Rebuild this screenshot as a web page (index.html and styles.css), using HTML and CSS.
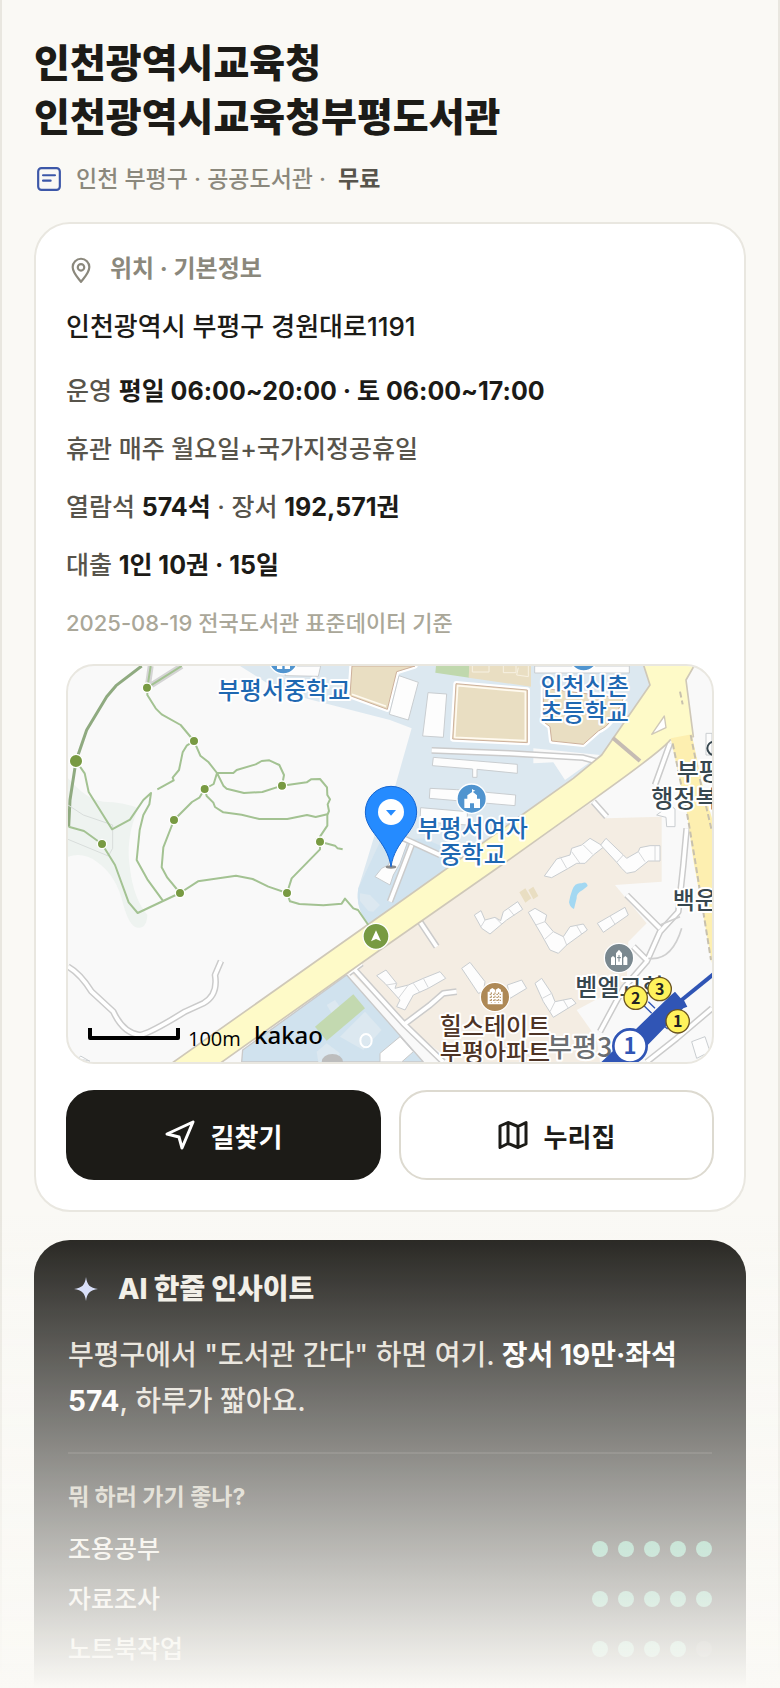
FILE: index.html
```html
<!DOCTYPE html>
<html lang="ko">
<head>
    <meta charset="UTF-8">
    <meta name="viewport" content="width=device-width, initial-scale=1.0">
    <title>인천광역시교육청부평도서관</title>
    <link rel="stylesheet" href="styles.css">
</head>
<body>
    <main class="page">
        <h1>인천광역시교육청<br>인천광역시교육청부평도서관</h1>
        <p class="meta">
            <svg class="meta-icon" viewBox="0 0 24 24">
                <rect x="2" y="2" width="20" height="20" rx="3"/>
                <path d="M6.500 8.500h11M6.500 13.500h7"/>
            </svg>
            <span>인천 부평구 · 공공도서관 ·</span>
            <b>무료</b>
        </p>

        <section class="card">
            <h2 class="card-title">
                <svg class="pin-icon" viewBox="0 0 24 24">
                    <path d="M12 23C9 19 4.300 14.500 4.300 9.300a7.700 7.700 0 0 1 15.400 0C19.700 14.500 15 19 12 23z"/>
                    <circle cx="12" cy="9.500" r="3"/>
                </svg>
                위치 · 기본정보
            </h2>
            <p class="address">인천광역시 부평구 경원대로1191</p>
            <p class="info">운영 <b>평일 06:00~20:00 · 토 06:00~17:00</b></p>
            <p class="info">휴관 매주 월요일+국가지정공휴일</p>
            <p class="info">열람석 <b>574석</b> · 장서 <b>192,571권</b></p>
            <p class="info">대출 <b>1인 10권 · 15일</b></p>
            <p class="source">2025-08-19 전국도서관 표준데이터 기준</p>

            <div class="map">
                <svg viewBox="24 33 1932 1188" preserveAspectRatio="xMidYMid slice">
                    <!-- 바탕 -->
                    <path fill="#eef3f0" d="M24 370Q80 435 130 440Q190 440 235 460Q195 550 210 640Q220 730 262 780Q260 820 235 818Q210 820 190 750Q170 660 110 620Q70 590 24 605z"/>
                    <path fill="#dce8f0" d="M540 33Q600 70 660 110L990 195 1055 220 1005 395 950 520Q920 620 895 700 885 760 925 805L1540 370 1640 300 1770 90V33z"/>
                    <path fill="#d1e3ef" d="M960 560L1090 550 1230 610 1100 690 990 770 925 805Q885 760 895 700z"/>
                    <path fill="#f9f9f9" d="M1420 280L1620 300 1515 375 1480 322 1420 325z"/>
                    <path fill="#f4ede3" d="M870 950L1590 445 1640 490 1805 485V680L1665 690 1760 805 1705 860 1700 985 1550 1065 1610 1150 1620 1221H1180L1030 1110z"/>
                    <path fill="#d0e2ee" stroke="#c9c9c9" stroke-width="4" d="M545 1221L548 1185 860 960 1090 1221z"/>
                    <path fill="#dce8f0" d="M800 1050l25-15 15 20-25 20zM840 1145l75-75 50 55-55 60zM770 1190l30-25 40 30-15 26h-50zM900 715l30 5 30 30-20 20-15-2-25-30z"/>
                    <path fill="#c3d9b0" d="M765 1115L880 1018 915 1060 800 1157z"/>
                    <path fill="#fff" stroke="#c9c9c9" stroke-width="3" d="M960 1195l60-50 40 45-35 31h-65z"/>
                    <ellipse cx="918" cy="1157" rx="17" ry="20" fill="none" stroke="#fff" stroke-width="6"/>
                    <path fill="#bdbdbd" d="M785 1221a32 24 0 0 1 64 0z"/>

                    <!-- 운동장 -->
                    <path fill="#c0d8ad" d="M1128 33h100v35l-102-15z"/>
                    <path fill="#e9dec2" d="M1228 33h185v62l-187-27z"/>
                    <path fill="none" stroke="#f7f1e2" stroke-width="3" d="M1237 33v18h50V33M1330 33v20h38V33M1375 38l-5 22 35 5V33M980 33v20"/>
                    <g stroke="#fff" stroke-width="16">
                        <path d="M876 33L870 122 982 163 1010 50 1065 33z"/>
                        <path d="M1188 86L1402 105V263L1178 252z"/>
                        <path d="M1450 100L1690 130Q1660 210 1615 228L1570 268 1475 258 1470 215 1450 200z"/>
                    </g>
                    <g fill="#e9dec2" stroke="#cdb09b" stroke-width="3">
                        <path d="M876 33L870 122 982 163 1010 50 1065 33z"/>
                        <path d="M1188 86L1402 105V263L1178 252z"/>
                        <path d="M1450 100L1690 130Q1660 210 1615 228L1570 268 1475 258 1470 215 1450 200z"/>
                    </g>
                    <path fill="none" stroke="#fffaf0" stroke-width="5" d="M1193 92L1396 110V257L1184 247zM876 118L978 154"/>

                    <!-- 건물 -->
                    <g fill="#fdfdfd" stroke="#c9cdd0" stroke-width="3">
                        <path d="M680 33L675 62 775 64 782 33zM1017 62L1075 82 1045 195 988 178zM1104 113L1160 117 1150 247 1088 243zM1424 33V54H1708V33z"/>
                        <path d="M1120 307L1372 328 1372 355 1251 343V367H1238V342L1117 332zM1110 400L1190 404 1280 412 1367 420 1365 452 1108 430zM1082 458L1222 470V510L1080 500z"/>
                        <path d="M1010 560L1045 555 1020 625 1000 660 990 690 945 665 965 640 985 630z"/>
                        <path d="M1790 480L1830 450 1845 462V515H1820L1818 487zM1938 235h18v65h-18z"/>
                        <path d="M1453 663L1490 612 1530 600 1535 580 1565 570 1590 550 1632 575 1600 600 1575 625 1550 625 1525 640 1475 668z"/>
                        <path d="M1622 570L1638 550 1690 600 1700 610 1735 590 1740 578 1770 572H1800V618H1765L1725 650 1700 655 1685 640 1670 622z"/>
                        <path d="M1243 780L1263 767 1275 795 1305 787 1322 797 1330 770 1373 740 1388 763 1340 795 1290 837 1265 820z"/>
                        <path d="M1405 772L1425 760 1460 780 1455 800 1480 830 1510 845 1530 815 1570 807 1582 825 1520 870 1495 895 1470 885 1445 840z"/>
                        <path d="M1612 805L1695 757 1705 780 1630 832zM1205 940L1230 922 1275 980 1270 1010 1255 1015zM1342 990L1385 975 1400 1000 1350 1030z"/>
                        <path d="M950 962L978 945 1010 985 1005 1000 1045 990 1090 970 1140 950 1157 970 1105 1000 1060 1020 1035 1065 1010 1055 1020 1035 975 985z"/>
                        <path d="M1425 985L1445 970 1475 1015 1485 1040 1535 1030 1548 1045 1480 1087 1450 1040z"/>
                        <path d="M1895 1160L1935 1145 1950 1190 1910 1210zM62 1203l28 16-35-8z"/>
                    </g>
                    <g fill="none" stroke="#d6d8da" stroke-width="3">
                        <path d="M1275 795l-12 20M1305 787l20 20M1345 760l18 22M1455 800l-28 10M1480 830l-25 22M1510 845l10 25M1550 812l15 25M1650 783l15 25M1690 600l-20 22M1735 590l20 30M1785 572v46M1010 985l-30 5M1045 990l-30 40M1060 985l20 28M1090 970l15 28M1500 605l20 35M1535 590l25 35M1570 570l28 28M1475 1015l-28 15M1485 1040l-15 30M1510 1035l15 25"/>
                    </g>
                    <path fill="#e9dec2" d="M1378 712l18-12 18 30-18 13zM1405 705l15-10 15 28-15 10z"/>
                    <path fill="#a3d8f2" d="M1565 685q15-8 18 8l-15 12q-20 10-18 25l-8 32q-12-5-15-20 3-20 10-38 8-22 28-19z"/>

                    <!-- 골목길 -->
                    <g class="road-case">
                        <path d="M1115 286L1350 295 1570 308 1620 322M885 945L1030 1105 1150 1221M1030 1110L1110 1050 1150 1015 1190 1010M1600 440L1640 485M1080 800L1130 875M1020 545L1140 600M1055 570L990 740M24 935Q60 955 95 1010L160 1070Q190 1135 240 1140 270 1135 375 1070L430 1045Q475 1020 465 960L483 918"/>
                        <path d="M1830 265L1785 390M1880 520L1870 630 1855 770 1800 830 1760 920 1690 1000 1620 1130M1700 720L1800 820M1720 875L1765 920M1956 1060L1850 1150 1760 1221M865 955L905 925"/>
                    </g>
                    <g class="road">
                        <path d="M1115 286L1350 295 1570 308 1620 322M885 945L1030 1105 1150 1221M1030 1110L1110 1050 1150 1015 1190 1010M1600 440L1640 485M1080 800L1130 875M1020 545L1140 600M1055 570L990 740M24 935Q60 955 95 1010L160 1070Q190 1135 240 1140 270 1135 375 1070L430 1045Q475 1020 465 960L483 918"/>
                        <path d="M1830 265L1785 390M1880 520L1870 630 1855 770 1800 830 1760 920 1690 1000 1620 1130M1700 720L1800 820M1720 875L1765 920M1956 1060L1850 1150 1760 1221M865 955L905 925"/>
                    </g>
                    <path fill="none" stroke="#cfcfcf" stroke-width="5" d="M1800 810l60-25M1765 910q70 10 100-90"/>

                    <!-- 큰길 -->
                    <path fill="#fefac8" stroke="#cfc8b8" stroke-width="5" d="M335 1225L990 762 1540 370 1625 300 1770 90 1750 28H1905L1878 75 1900 245 1830 255Q1815 280 1605 430L1325 630 960 885 480 1225z"/>
                    <path fill="#fdefb0" d="M1832 250L1895 238 1930 400 1956 490V925L1900 615 1882 480z"/>
                    <path fill="none" stroke="#c8c1ae" stroke-width="6" stroke-dasharray="18 9" d="M1838 265L1882 480 1905 615 1953 915M1892 240L1912 340 1956 530M1860 110L1868 148"/>
                    <path fill="none" stroke="#c5bbb3" stroke-width="12" d="M1658 248L1740 318"/>
                    <path fill="#fff" stroke="#cfc8b8" stroke-width="4" d="M1775 238L1813 183 1818 218z"/>

                    <!-- 산책로 -->
                    <path fill="none" stroke="#d4d4d4" stroke-width="18" d="M272 33L264 90M365 33L275 90"/>
                    <path fill="none" stroke="#8faa80" stroke-width="9" d="M245 33L168 92 140 125 80 225 48 318 30 435 26 515"/>
                    <path fill="none" stroke="#d8dddb" stroke-width="3" d="M24 450L70 480 158 510V580L145 603 24 553"/>
                    <g class="trail">
                        <path d="M272 33L262 98V120L287 160 305 178 362 210 402 258 421 302 446 322 471 354H520L530 345 587 328 605 318 628 316 658 330 672 360 666 392M365 33L262 98"/>
                        <path d="M402 258L380 272 368 292 357 345 338 368 341 376 292 403M471 354L490 392 500 401 552 414 607 411 666 392 740 382 753 373 780 372 801 397 802 420 810 433 803 448 807 468 802 480V512L780 545V560M471 354L461 387 434 402 418 428 396 441 342 495 310 577 305 637 322 668 360 714"/>
                        <path d="M434 402L440 423 460 443 465 456 490 472 545 479 598 492H682L741 480 767 486 802 478M780 560L825 572 833 580 848 583M780 560L780 583 695 670 681 714"/>
                        <path d="M48 318L74 355 86 411 156 523 210 494 250 435 273 414 268 448 250 480 239 525 230 615 262 673 308 736M26 515L72 528 126 567 165 630 206 742 233 774 360 714 414 679 528 662 578 672 625 695 681 714 690 739 718 747 790 751 845 746 855 731 880 760 894 765 925 810"/>
                    </g>
                    <g fill="#789a42" stroke="#fff" stroke-width="4">
                        <circle cx="261" cy="98" r="14"/>
                        <circle cx="402" cy="258" r="14"/>
                        <circle cx="434" cy="402" r="14"/>
                        <circle cx="342" cy="495" r="14"/>
                        <circle cx="666" cy="392" r="14"/>
                        <circle cx="780" cy="560" r="14"/>
                        <circle cx="126" cy="567" r="14"/>
                        <circle cx="360" cy="714" r="14"/>
                        <circle cx="681" cy="714" r="14"/>
                        <circle cx="48" cy="318" r="20"/>
                        <circle cx="948" cy="844" r="39"/>
                    </g>
                    <path fill="#fff" d="M948 826L963 859 948 852 933 859z"/>

                    <!-- 시설 아이콘 -->
                    <g stroke="#fff" stroke-width="4">
                        <circle cx="670" cy="14" r="43" fill="#5094cf"/>
                        <circle cx="1571" cy="5" r="43" fill="#5094cf"/>
                        <circle cx="1235" cy="431" r="44" fill="#5094cf"/>
                        <circle cx="1677" cy="909" r="44" fill="#7a888f"/>
                        <circle cx="1305" cy="1026" r="44" fill="#ae8956"/>
                    </g>
                    <path fill="#fff" d="M651 30h16v12h-16zM674 30h16v12h-16z"/>
                    <path fill="#fff" d="M1213 459V431H1222V421L1236 411V403H1239V411L1251 421V431H1260V459H1242V445H1230V459zM1236 403l10 4-10 5z"/>
                    <path fill="#fff" d="M1653 930V908l6-5 6 5V930zM1690 930V908l6-5 6 5V930zM1668 930V895l9-11 9 11V930z"/>
                    <path fill="#fff" d="M1283 1048V1010h6v-6l8-5 8 5v6h2v-6l8-5 8 5v6h5V1048z"/>
                    <path fill="none" stroke="#7a888f" stroke-width="3" d="M1677 900v20M1671 908h12"/>
                    <path fill="none" stroke="#ae8956" stroke-width="3" stroke-dasharray="5 5" d="M1289 1018h34M1289 1027h34M1289 1036h34M1294 1012v32M1305 1012v32M1316 1012v32"/>

                    <!-- 지명 -->
                    <g class="label school">
                        <text x="672" y="131">부평서중학교</text>
                        <text x="1574" y="121">인천신촌</text>
                        <text x="1574" y="199">초등학교</text>
                        <text x="1238" y="547">부평서여자</text>
                        <text x="1238" y="625">중학교</text>
                    </g>
                    <g class="label place">
                        <text x="1850" y="376">부평</text>
                        <text x="1774" y="455">행정복지</text>
                        <text x="1838" y="763">백운역</text>
                        <text x="1546" y="1024">벧엘교회</text>
                        <circle cx="1962" cy="280" r="20" fill="none" stroke="#37474f" stroke-width="6"/>
                    </g>
                    <text class="label district" x="1462" y="1205">부평3동</text>
                    <g class="label apartment">
                        <text x="1305" y="1141">힐스테이트</text>
                        <text x="1305" y="1219">부평아파트</text>
                    </g>

                    <!-- 지하철 -->
                    <path fill="none" stroke="#3055b5" stroke-width="12" d="M1865 1035L1960 958"/>
                    <path fill="none" stroke="#3055b5" stroke-width="4" d="M1752 1052L1775 1075M1765 1040l20 20M1808 1110l15 12"/>
                    <path fill="#3055b5" d="M1620 1225L1725 1125 1830 1023 1845 1010 1862 1030 1868 1028 1882 1055 1870 1060 1710 1225z"/>
                    <circle cx="1710" cy="1173" r="50" fill="#fff" stroke="#3055b5" stroke-width="8"/>
                    <text class="line-no" x="1710" y="1197">1</text>
                    <g class="exit">
                        <circle cx="1727" cy="1028" r="35"/>
                        <circle cx="1799" cy="1002" r="35"/>
                        <circle cx="1853" cy="1099" r="35"/>
                        <text x="1727" y="1046">2</text>
                        <text x="1799" y="1020">3</text>
                        <text x="1853" y="1117">1</text>
                    </g>

                    <!-- 도서관 위치 -->
                    <ellipse cx="993" cy="636" rx="16" ry="5" fill="#8b8b8b"/>
                    <path fill="#258bff" stroke="#1565d0" stroke-width="3" d="M993 394A77 77 0 0 1 1070 471C1070 530 1005 555 993 635 981 555 916 530 916 471A77 77 0 0 1 993 394z"/>
                    <circle cx="993" cy="471" r="39" fill="#fff"/>
                    <path fill="#258bff" d="M978 465H1008L993 482z"/>

                    <!-- 축척 -->
                    <path fill="none" stroke="#000" stroke-width="12" d="M90 1119V1149H354V1119"/>
                    <text class="scale" x="384" y="1172">100m</text>
                    <text class="kakao" x="582" y="1166">kakao</text>
                </svg>
            </div>

            <div class="actions">
                <button type="button" class="btn btn-dark">
                    <svg viewBox="0 0 30 30"><path d="M28 2L2 14l12 3 3 11z"/></svg>
                    길찾기
                </button>
                <button type="button" class="btn">
                    <svg viewBox="0 0 30 30"><path d="M2 6l8-3.500 10 4 8-4V24l-8 3.500-10-4-8 4zM10 2.500v21M20 6.500v21"/></svg>
                    누리집
                </button>
            </div>
        </section>

        <section class="insight">
            <h2 class="insight-title">
                <svg viewBox="0 0 24 24"><path d="M12 0c1 8 4 11 12 12-8 1-11 4-12 12-1-8-4-11-12-12 8-1 11-4 12-12z"/></svg>
                AI 한줄 인사이트
            </h2>
            <p class="insight-text">부평구에서 "도서관 간다" 하면 여기. <b>장서 19만·좌석 574</b>, 하루가 짧아요.</p>
            <h3>뭐 하러 가기 좋나?</h3>
            <ul class="ratings">
                <li>조용공부 <span class="dots"><i></i><i></i><i></i><i></i><i></i></span></li>
                <li>자료조사 <span class="dots"><i></i><i></i><i></i><i></i><i></i></span></li>
                <li>노트북작업 <span class="dots"><i></i><i></i><i></i><i></i><i class="off"></i></span></li>
            </ul>
        </section>
        <div class="fade"></div>
    </main>
</body>
</html>
```

FILE: styles.css
```css
* {
    box-sizing: border-box;
    margin: 0;
    padding: 0;
}
body {
    font-family: Inter, "Noto Sans CJK KR", sans-serif;
    font-weight: 500;
    background-color: #faf9f5;
    color: #1c1b17;
}
.page {
    position: relative;
    height: 100vh;
    overflow: hidden;
    padding: 36px 32px 0;
    border-left: 2px solid #e9e7e0;
    border-right: 2px solid #e9e7e0;
}
h1 {
    font-size: 39px;
    line-height: 54px;
    font-weight: 800;
}
svg {
    fill: none;
    stroke: currentColor;
    stroke-linecap: round;
    stroke-linejoin: round;
    flex-shrink: 0;
}
.meta {
    display: flex;
    align-items: center;
    gap: 12px;
    margin-top: 18px;
    font-size: 23px;
    line-height: 34px;
    color: #8b887c;
}
.meta b {
    color: #57544b;
}
.meta-icon {
    width: 26px;
    height: 26px;
    margin: 0 2px;
    color: #3c57a8;
    stroke-width: 2;
}
.card {
    margin-top: 26px;
    padding: 28px 30px 30px;
    background-color: #ffffff;
    border: 2px solid #e9e7e0;
    border-radius: 36px;
}
.card-title {
    display: flex;
    align-items: center;
    gap: 16px;
    padding-left: 2px;
    font-size: 24px;
    line-height: 34px;
    color: #8b887c;
}
.pin-icon {
    width: 26px;
    height: 26px;
    margin-top: 2px;
    stroke-width: 2;
}
.address {
    margin-top: 22px;
    font-size: 26px;
    line-height: 38px;
}
.info {
    margin-top: 24px;
    font-size: 25px;
    line-height: 34px;
    color: #57544b;
}
.address + .info {
    margin-top: 28px;
}
.info b {
    color: #1c1b17;
}
.source {
    margin-top: 26px;
    font-size: 22px;
    line-height: 30px;
    color: #aaa799;
}

/* 지도 */
.map {
    margin-top: 26px;
    height: 400px;
    border: 2px solid #e9e7e0;
    border-radius: 28px;
    overflow: hidden;
    background-color: #f9f9f9;
}
.map svg {
    display: block;
    width: 100%;
    height: 100%;
    stroke: none;
    stroke-linecap: butt;
}
.road-case path {
    fill: none;
    stroke: #cbcbcb;
    stroke-width: 20px;
}
.road path {
    fill: none;
    stroke: #ffffff;
    stroke-width: 11px;
}
.trail path {
    fill: none;
    stroke: #a3c292;
    stroke-width: 6px;
}
.label {
    font-size: 72px;
    font-weight: 500;
    text-anchor: middle;
    paint-order: stroke;
    font-family: "Noto Sans CJK KR", sans-serif;
}
.label text, .district {
    stroke: #ffffff;
    stroke-width: 12px;
}
.school {
    fill: #1e68b2;
}
.place {
    fill: #37474f;
    text-anchor: start;
}
.apartment {
    fill: #4e3426;
}
.district {
    fill: #6a6d70;
    font-size: 81px;
    text-anchor: start;
}
.line-no, .exit text {
    font-family: "Noto Sans CJK KR", sans-serif;
    font-weight: 700;
    text-anchor: middle;
}
.line-no {
    font-size: 66px;
    fill: #3055b5;
}
.exit circle {
    fill: #fff25c;
    stroke: #6b5420;
    stroke-width: 4px;
}
.exit text {
    font-size: 48px;
    fill: #222222;
}
.scale {
    font-family: "Open Sans", sans-serif;
    font-size: 60px;
    font-weight: 400;
    fill: #000000;
}
.kakao {
    font-family: "Noto Sans", sans-serif;
    font-size: 72px;
    fill: #000000;
}

.actions {
    display: flex;
    gap: 18px;
    margin-top: 26px;
}
.btn {
    flex: 1;
    display: flex;
    align-items: center;
    justify-content: center;
    gap: 16px;
    height: 90px;
    font-family: inherit;
    font-size: 26px;
    font-weight: 700;
    color: #1c1b17;
    background-color: #ffffff;
    border: 2px solid #dddad0;
    border-radius: 28px;
    cursor: pointer;
}
.btn-dark {
    color: #ffffff;
    background-color: #1c1b17;
    border-color: #1c1b17;
}
.btn svg {
    width: 30px;
    height: 30px;
    stroke-width: 3;
}

.insight {
    margin-top: 28px;
    padding: 30px 34px 60px;
    background-color: #1c1b17;
    color: #f1eee6;
    border-radius: 36px;
}
.insight-title {
    display: flex;
    align-items: center;
    gap: 20px;
    padding-left: 6px;
    font-size: 28px;
    line-height: 38px;
    font-weight: 800;
}
.insight-title svg {
    width: 24px;
    height: 24px;
    fill: #d3dbfa;
    stroke: none;
}
.insight-text {
    margin-top: 24px;
    padding-bottom: 28px;
    font-size: 28px;
    line-height: 46px;
    color: #e3dfd5;
    border-bottom: 2px solid rgba(255,255,255,0.1);
}
.insight-text b {
    color: #ffffff;
}
.insight h3 {
    margin-top: 28px;
    font-size: 23px;
    line-height: 30px;
    color: #c5c0b0;
}
.ratings {
    list-style: none;
    margin-top: 12px;
}
.ratings li {
    display: flex;
    align-items: center;
    justify-content: space-between;
    font-size: 25px;
    line-height: 50px;
}
.dots {
    display: flex;
    gap: 10px;
}
.dots i {
    width: 16px;
    height: 16px;
    border-radius: 50%;
    background-color: #5cb896;
}
.dots .off {
    background-color: rgba(255,255,255,0.15);
}
/* 아래쪽으로 갈수록 흐려지는 막 */
.fade {
    position: fixed;
    left: 0;
    right: 0;
    bottom: 0;
    height: 480px;
    background: linear-gradient(rgba(250,249,245,0), #faf9f5);
    pointer-events: none;
}
```
